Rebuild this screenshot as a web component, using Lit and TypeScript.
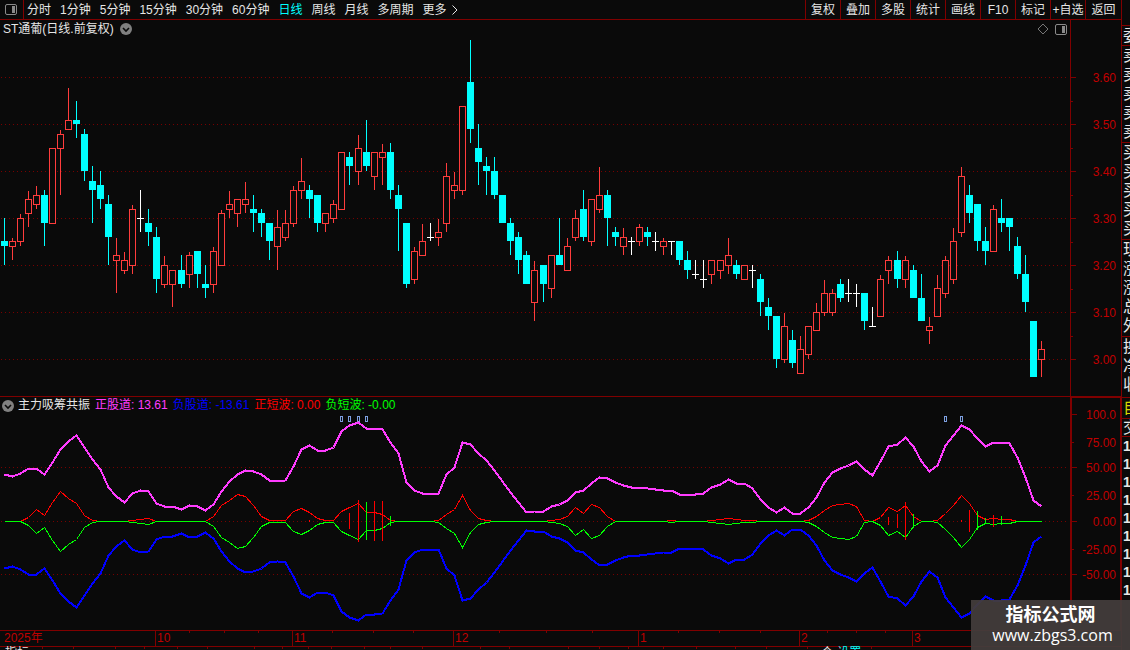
import { LitElement, html, svg, css } from "lit";
import { customElement, state } from "lit/decorators.js";

type Candle = [kind: "r" | "c" | "w", high: number, top: number, bottom: number, low: number];

// r = rising, c = falling, w = unchanged; the numbers are heights on the plot
const CANDLES: Candle[] = `
c 218 241 246 265|r 238 241 247 260|r 214 218 242 246|r 191 199 214 227|r 186 195 205 209
c 190 195 223 246|r 148 148 224 224|r 130 134 149 195|r 88 120 130 130|c 101 120 124 138
c 129 134 171 181|c 166 181 190 223|c 171 185 199 209|c 195 204 237 265|r 238 255 261 293
r 252 260 271 274|r 205 209 266 274|w 190 218 219 232|c 209 223 232 246|c 227 237 279 293
r 256 265 285 288|r 270 270 285 307|c 255 270 284 288|r 252 255 275 288|c 251 251 274 288
c 265 284 288 298|r 247 251 285 293|r 210 213 266 266|r 191 204 210 218|r 199 199 214 227
r 182 199 205 213|c 195 209 213 232|c 209 213 223 237|c 223 223 241 260|r 210 227 247 270
r 210 223 238 241|r 186 190 224 227|r 158 181 191 199|c 185 190 199 218|c 195 195 223 232
r 213 213 224 232|r 200 204 219 223|r 152 152 210 210|c 152 157 166 185|r 135 148 172 185
c 120 152 166 171|r 152 152 177 190|r 144 152 158 185|c 143 152 190 199|c 185 195 209 251
c 223 223 284 288|r 247 251 280 284|r 224 241 256 256|w 223 237 238 241|r 219 232 238 246
r 163 176 224 232|r 172 185 191 199|r 106 106 191 195|c 40 82 129 143|c 124 148 162 185
c 157 166 171 195|c 157 171 195 199|c 195 195 223 223|c 218 223 241 255|c 232 237 260 274
c 251 255 284 284|r 261 270 303 321|c 265 265 284 302|r 255 255 289 298|c 218 255 265 265
r 238 246 271 271|r 210 218 238 241|c 190 209 237 241|r 199 199 242 246|r 167 195 210 213
c 190 195 218 246|c 227 232 237 246|r 228 237 247 255|w 237 241 242 255|r 224 227 242 246
c 227 232 237 246|w 232 241 242 251|r 238 241 247 255|w 241 241 242 255|c 241 241 260 265
c 251 260 270 279|w 260 274 275 279|w 260 279 280 288|r 260 260 275 284|r 260 260 271 279
r 238 255 266 274|c 260 265 274 279|r 265 265 280 280|w 265 270 271 288|c 274 279 302 316
c 298 307 316 330|c 316 316 359 368|r 313 326 360 363|c 330 340 363 368|r 336 349 374 374
r 326 326 355 359|r 303 312 331 331|r 280 293 313 316|r 289 293 313 316|c 279 284 298 302
w 279 293 294 302|w 284 293 294 307|c 293 293 321 330|w 307 326 327 327|r 275 279 317 317
r 256 260 271 284|c 251 260 279 288|r 256 260 280 288|c 265 270 298 298|c 274 298 321 321
r 317 326 331 344|r 275 288 317 317|r 256 260 294 298|r 228 241 280 284|r 167 176 233 237
c 185 195 213 223|c 204 204 241 251|c 227 241 251 265|r 205 209 252 252|c 199 218 223 232
c 218 218 227 251|c 237 246 274 279|c 255 274 302 312|c 321 321 377 377|r 341 349 360 377`
  .trim()
  .split(/[|\n]/)
  .map((row) => {
    const [kind, ...v] = row.trim().split(" ");
    return [kind, ...v.map(Number)] as Candle;
  });

const TREND = [
  474, 476, 473, 468, 468, 474, 462, 449, 441, 435, 447, 459, 469, 487, 496, 502, 493, 490, 491, 503, 506, 506,
  509, 505, 506, 510, 504, 491, 481, 474, 470, 471, 474, 480, 481, 480, 466, 449, 445, 450, 450, 447, 431, 425,
  422, 428, 428, 429, 442, 453, 482, 490, 493, 493, 493, 474, 467, 442, 444, 453, 460, 470, 481, 492, 502, 512,
  511, 511, 506, 504, 500, 492, 490, 483, 477, 478, 482, 485, 487, 487, 488, 489, 490, 490, 494, 494, 494, 493,
  487, 484, 479, 483, 483, 488, 499, 507, 512, 507, 513, 513, 507, 497, 482, 472, 468, 465, 461, 469, 475, 461,
  446, 444, 437, 446, 461, 471, 465, 445, 435, 425, 429, 438, 446, 442, 442, 443, 457, 477, 500, 506,
];

const WAVE = [
  0, 0, 0, 4, 12, 6, 19, 30, 23, 18, 6, 1, 0, 0, 0, 0, 1, 2, 3, 0, 0, 0, 0, 0, 0, 0, 5, 16, 21, 27, 25, 16, 5, 1,
  1, 1, 10, 13, 9, 3, 1, 1, 10, 14, 18, 9, 9, 7, 1, 0, 0, 0, 0, 0, 1, 7, 12, 26, 11, 3, 1, 0, 0, 0, 0, 0, 0, 0,
  1, 2, 5, 14, 8, 17, 14, 5, 0, 0, 0, 0, 0, 0, 0, 1, 0, 0, 0, 0, 1, 2, 3, 2, 1, 1, 0, 0, 0, 0, 0, 0, 1, 5, 11,
  16, 17, 18, 15, 1, 0, 4, 14, 10, 16, 5, 0, 0, 1, 8, 16, 26, 18, 6, 2, 3, 2, 2, 0, 0, 0, 0,
];

const BARS: [number, number, number, string][] = [
  [309, 520, 522, "up"], [349, 513, 529, "up"], [358, 500, 542, "up"], [366, 502, 540, "down"],
  [374, 501, 541, "up"], [382, 501, 541, "up"], [390, 516, 526, "down"], [888, 517, 525, "up"],
  [897, 514, 528, "up"], [905, 502, 540, "up"], [913, 514, 528, "down"], [961, 520, 522, "up"],
  [969, 510, 532, "up"], [977, 511, 530, "down"], [985, 518, 524, "down"], [993, 515, 527, "up"],
  [1001, 516, 525, "down"],
];

const SIGNALS = [341, 349, 358, 366, 945, 961];
const PRICES = ["3.60", "3.50", "3.40", "3.30", "3.20", "3.10", "3.00"];
const LEVELS: [string, number][] = [
  ["100.0", 414], ["75.00", 442], ["50.00", 467], ["25.00", 495], ["0.00", 521], ["-25.00", 549], ["-50.00", 574],
];
const PERIODS = ["分时", "1分钟", "5分钟", "15分钟", "30分钟", "60分钟", "日线", "周线", "月线", "多周期"];
const TOOLS = ["复权", "叠加", "多股", "统计", "画线", "F10", "标记", "+自选", "返回"];
const MONTHS = ["2025年", "10", "11", "12", "1", "2", "3"];
const WEEKS = [189, 224, 258, 332, 373, 413, 499, 546, 592, 678, 719, 760, 827, 856, 885];
const TABS = [42, 73, 115, 144, 177, 207, 254, 282, 308, 331, 364, 390, 422, 480, 509, 568, 599, 628, 663, 696, 735, 766, 807, 839, 871];
const QUOTES = [["委"], ["卖", "卖", "卖", "卖", "卖"], ["买", "买", "买", "买", "买"], ["现", "涨", "涨", "总", "外"], ["换", "净", "收"]];

const slotX = (i: number) => 4 + 8 * i + Math.floor((i + 1) / 22.38);
const line = (ys: number[]) => ys.map((y, i) => `${slotX(i) + 0.5},${y + 0.5}`).join(" ");

const chevron = html`<svg width="12" height="12" viewBox="0 0 12 12" aria-hidden="true">
  <circle cx="6" cy="6" r="6" fill="#808080"></circle>
  <path d="M3 5l3 3 3-3" fill="none" stroke="#0a0a0a" stroke-width="1.6"></path>
</svg>`;

const paneIcon = html`<svg width="12" height="11" viewBox="0 0 12 11" aria-hidden="true">
  <rect x="0.5" y="0.5" width="11" height="10" rx="1.5" fill="none" stroke="#8a8a8a"></rect>
  <rect x="7" y="2" width="3" height="7" fill="#8a8a8a"></rect>
</svg>`;

const grid = (ys: number[]) =>
  ys.map((y) => svg`<line class="grid" x1="1" x2="1067" y1=${y + 0.5} y2=${y + 0.5}></line>`);

@customElement("price-panel")
class PricePanel extends LitElement {
  static styles = css`
    :host { display: grid; grid-template-columns: minmax(0, 1fr) 51px; border-bottom: 1px solid #800000; }
    .title { display: flex; align-items: center; gap: 6px; height: 18px; padding: 0 3px; }
    .name { font-size: 12px; line-height: 18px; font-weight: 400; margin: 0; color: #e6e6e6; }
    .space { flex: 1; }
    button { display: flex; padding: 0; border: 0; background: none; }
    .axis { border-left: 1px solid #800000; }
    svg { display: block; }
    .plot { width: 100%; shape-rendering: crispEdges; }
    .grid { stroke: #780000; stroke-dasharray: 1 3; }
    .r { stroke: #ff3c3c; fill: #0a0a0a; }
    .c { stroke: #00ffff; fill: #00ffff; }
    .w { stroke: #ffffff; fill: none; }
    .tick { stroke: #800000; shape-rendering: crispEdges; }
    text { font-size: 12px; fill: #c00000; text-anchor: end; }
  `;

  private candle([kind, high, top, bottom, low]: Candle, i: number) {
    const x = slotX(i) + 0.5;
    const wick = svg`<line x1=${x} x2=${x} y1=${high} y2=${low}></line>`;
    const body =
      kind === "w"
        ? svg`<line x1=${x - 3.5} x2=${x + 3.5} y1=${top + 0.5} y2=${top + 0.5}></line>`
        : svg`<rect x=${x - 3} y=${top + 0.5} width="6" height=${bottom - top - 1}></rect>`;
    return svg`<g class=${kind}>${wick}${body}</g>`;
  }

  render() {
    return html`
      <div>
        <div class="title">
          <h1 class="name">ST通葡(日线.前复权)</h1>
          <button aria-label="股票菜单">${chevron}</button>
          <span class="space"></span>
          <button aria-label="标注">
            <svg width="12" height="12" viewBox="0 0 12 12"><path d="M6 1l5 5-5 5-5-5z" fill="none" stroke="#777"></path></svg>
          </button>
          <button aria-label="侧栏">${paneIcon}</button>
        </div>
        <svg class="plot" height="358" viewBox="0 38 1070 358" preserveAspectRatio="none" role="img" aria-label="日线图">
          ${grid(PRICES.map((_, i) => 77 + i * 47))} ${CANDLES.map((c, i) => this.candle(c, i))}
        </svg>
      </div>
      <div class="axis">
        <svg width="50" height="376" viewBox="0 20 50 376">
          ${PRICES.map((p, i) => {
            const y = 77.5 + i * 47;
            return svg`<line class="tick" x1="0" x2="5" y1=${y} y2=${y}></line>
              ${i < 6 ? svg`<line class="tick" x1="0" x2="2" y1=${y + 24} y2=${y + 24}></line>` : null}
              <text x="45" y=${y + 4.5}>${p}</text>`;
          })}
        </svg>
      </div>
    `;
  }
}

@customElement("indicator-panel")
class IndicatorPanel extends LitElement {
  static styles = css`
    :host { display: grid; grid-template-columns: minmax(0, 1fr) 51px; }
    .legend { display: flex; align-items: center; gap: 5px; height: 17px; padding: 0 2px; font-size: 12px; line-height: 17px; white-space: pre; }
    button { display: flex; padding: 0; border: 0; background: none; }
    .title { color: #e6e6e6; margin-left: -1px; }
    .pos { color: #ff3cff; }
    .neg { color: #0000ff; }
    .pw { color: #ff0000; }
    .nw { color: #00ff00; }
    svg { display: block; }
    .plot { width: 100%; shape-rendering: crispEdges; }
    .grid { stroke: #780000; stroke-dasharray: 1 3; }
    .up, .rise { stroke: #ff0000; }
    .down, .fall { stroke: #00ff00; }
    .high { stroke: #ff3cff; stroke-width: 2; }
    .low { stroke: #0000ff; stroke-width: 2; }
    .signal { stroke: #7d9fe0; }
    polyline, .signal { fill: none; }
    .axis { border: solid #800000; border-width: 1px 1px 0 2px; box-sizing: border-box; }
    .tick { stroke: #800000; shape-rendering: crispEdges; }
    text { font-size: 12px; fill: #c00000; text-anchor: end; }
  `;

  render() {
    return html`
      <div>
        <div class="legend">
          <button aria-label="指标菜单">${chevron}</button>
          <span class="title">主力吸筹共振</span>
          <span class="pos">正股道: 13.61</span>
          <span class="neg">负股道: -13.61</span>
          <span class="pw">正短波: 0.00</span>
          <span class="nw">负短波: -0.00</span>
        </div>
        <svg class="plot" height="216" viewBox="0 414 1070 216" preserveAspectRatio="none" role="img" aria-label="主力吸筹共振">
          ${grid([467, 521, 574])}
          ${SIGNALS.map((x) => svg`<rect class="signal" x=${x - 0.5} y="416.5" width="2" height="5"></rect>`)}
          <polyline class="rise" points=${line(WAVE.map((d) => 521 - d))}></polyline>
          <polyline class="fall" points=${line(WAVE.map((d) => 521 + d))}></polyline>
          ${BARS.map(([x, a, b, k]) => svg`<line class=${k} x1=${x + 0.5} x2=${x + 0.5} y1=${a} y2=${b}></line>`)}
          <polyline class="high" points=${line(TREND)}></polyline>
          <polyline class="low" points=${line(TREND.map((y) => 1042 - y))}></polyline>
        </svg>
      </div>
      <div class="axis">
        <svg width="48" height="232" viewBox="2 398 48 232">
          ${LEVELS.map(
            ([t, y], i) => svg`<line class="tick" x1="1" x2=${i % 2 ? 4 : 7} y1=${y + 0.5} y2=${y + 0.5}></line>
              <text x="46" y=${y + 5}>${t}</text>`
          )}
        </svg>
      </div>
    `;
  }
}

@customElement("quote-strip")
class QuoteStrip extends LitElement {
  static styles = css`
    :host { display: block; overflow: hidden; padding-top: 25px; border-left: 1px solid #800000; color: #e6e6e6; font-size: 16px; }
    .group { border-top: 1px solid #800000; padding-left: 1px; }
    .row { line-height: 19px; height: 19px; white-space: nowrap; }
    .group:nth-child(n + 2):nth-child(-n + 4) { padding-bottom: 1px; }
    .mark { color: #d8d800; border-top: 1px solid #800000; height: 20px; line-height: 20px; padding-left: 1px; }
    .deal { border: solid #800000; border-width: 1px 0; height: 17px; line-height: 18px; padding-left: 1px; }
    .tick { font-weight: 700; line-height: 18px; height: 18px; font-size: 14px; padding-left: 1px; }
    .end { height: 3px; }
  `;

  render() {
    return html`
      ${QUOTES.map((g) => html`<div class="group">${g.map((t) => html`<div class="row">${t}</div>`)}</div>`)}
      <div class="end"></div>
      <div class="mark">自</div>
      <div class="deal">交</div>
      ${Array.from({ length: 9 }, () => html`<div class="tick">1</div>`)}
    `;
  }
}

@customElement("app-root")
class AppRoot extends LitElement {
  @state() private period = "日线";

  static styles = css`
    :host {
      display: grid; grid-template-columns: minmax(0, 1fr) 9px; position: relative; height: 100vh; min-height: 650px; overflow: hidden;
      background: #0a0a0a; color: #e6e6e6; font: 12px/16px "Liberation Sans", "Noto Sans CJK SC", sans-serif;
    }
    button { font: inherit; color: inherit; background: none; border: 0; padding: 0; white-space: nowrap; }
    svg { display: block; }
    .top { display: flex; height: 19px; border-bottom: 1px solid #800000; }
    .pane { display: flex; align-items: center; box-sizing: content-box; width: 18px; padding-left: 5px; border-right: 1px solid #800000; }
    .periods { display: flex; flex: 1; align-items: center; gap: 9px; padding-left: 3px; }
    .periods .on { color: #00ffff; }
    .more { display: flex; align-items: center; gap: 5px; }
    .tools { display: flex; }
    .tools button { width: 35px; border-left: 1px solid #800000; }
    .tools button:last-child { width: 36px; }
    .lines { stroke: #800000; shape-rendering: crispEdges; width: 100%; }
    .time { border: solid #800000; border-width: 1px 0; height: 15px; overflow: hidden; }
    .months { display: grid; grid-template-columns: 155fr 137fr 161fr 185fr 161fr 113fr 209fr; margin-top: -2px; color: #c00000; }
    .months span { border-left: 1px solid #800000; padding-left: 1px; height: 15px; line-height: 15px; }
    .months span:first-child { border: 0; padding-left: 4px; }
    .foot { display: grid; grid-template-columns: 820fr 301fr; height: 12px; margin-top: -2px; padding-left: 5px; line-height: 12px; }
    .hot { color: #00ffff; padding-left: 4px; }
    .mark { position: absolute; right: 0; bottom: 0; width: 159px; height: 50px; background: rgba(66, 60, 59, 0.95); color: #fff; text-align: center; }
    .mark strong { display: block; font-size: 18px; line-height: 20px; padding-top: 5px; }
    .mark a { display: block; color: #fff; text-decoration: none; padding-left: 4px; font: 16px/20px "Open Sans", "Noto Sans", sans-serif; }
  `;

  render() {
    return html`
      <main>
        <header class="top">
          <button class="pane" aria-label="面板">${paneIcon}</button>
          <nav class="periods">
            ${PERIODS.map(
              (p) => html`<button class=${p === this.period ? "on" : ""} @click=${() => (this.period = p)}>${p}</button>`
            )}
            <button class="more">更多<svg width="6" height="10" viewBox="0 0 6 10"><path d="M0.5 0.5L5 5 0.5 9.5" fill="none" stroke="#e6e6e6"></path></svg></button>
          </nav>
          <div class="tools">${TOOLS.map((t) => html`<button>${t}</button>`)}</div>
        </header>
        <price-panel></price-panel>
        <indicator-panel></indicator-panel>
        <div class="time">
          <svg class="lines" height="2" viewBox="0 0 1121 2" preserveAspectRatio="none">
            ${WEEKS.map((x) => svg`<line x1=${x + 0.5} x2=${x + 0.5} y1="0" y2="2"></line>`)}
          </svg>
          <div class="months">${MONTHS.map((m) => html`<span>${m}</span>`)}</div>
        </div>
        <svg class="lines" height="2" viewBox="0 0 1121 2" preserveAspectRatio="none">
          ${TABS.map((x) => svg`<line x1=${x + 0.5} x2=${x + 0.5} y1="0" y2="2"></line>`)}
        </svg>
        <div class="foot"><span>指标</span><span>个<span class="hot">设置</span></span></div>
      </main>
      <quote-strip></quote-strip>
      <aside class="mark"><strong>指标公式网</strong><a href="#">www.zbgs3.com</a></aside>
    `;
  }
}
